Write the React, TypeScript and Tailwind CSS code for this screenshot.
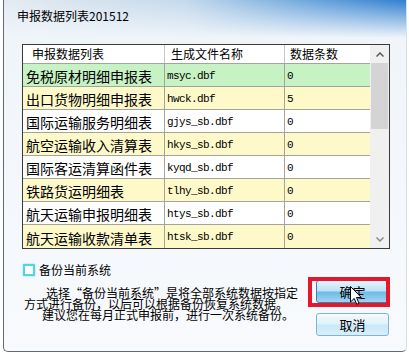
import React from "react";

const rows = [
  { name: "免税原材明细申报表", file: "msyc.dbf", n: "0", bg: "bg-[#c6f2c4]" },
  { name: "出口货物明细申报表", file: "hwck.dbf", n: "5", bg: "bg-[#fdf9c9]" },
  { name: "国际运输服务明细表", file: "gjys_sb.dbf", n: "0", bg: "bg-white" },
  { name: "航空运输收入清算表", file: "hkys_sb.dbf", n: "0", bg: "bg-[#fdf9c9]" },
  { name: "国际客运清算函件表", file: "kyqd_sb.dbf", n: "0", bg: "bg-white" },
  { name: "铁路货运明细表", file: "tlhy_sb.dbf", n: "0", bg: "bg-[#fdf9c9]" },
  { name: "航天运输申报明细表", file: "htys_sb.dbf", n: "0", bg: "bg-white" },
  { name: "航天运输收款清单表", file: "htsk_sb.dbf", n: "0", bg: "bg-[#fdf9c9]" },
];

export default function App() {
  return (
    <div className="relative w-[409px] h-[354px] overflow-hidden bg-white font-['Noto_Sans_CJK_SC',sans-serif] text-black">
      <div className="ml-[3px] w-[404px] h-[352px] flex flex-col border-l border-b border-r border-l-[#5f6a76] border-b-[#5f6a76] border-r-[#d5dfe9] rounded-b-[5px] bg-[linear-gradient(to_bottom,rgba(240,245,250,0)_0px,#f0f5fa_38px,#f8fafd_100%),linear-gradient(to_right,#e4eaf1_0%,#c4d9ec_45%,#6fa8dd_75%,#2f80cf_100%)]">
        {/* title */}
        <div className="h-[32px] pl-[13px] flex items-center text-[12px] leading-none">
          申报数据列表201512
        </div>

        {/* table */}
        <div className="ml-[18px] mt-[12px] w-[368px] h-[205px] border border-[#3a3a3a] flex bg-white">
          <div className="w-[347px] flex flex-col">
            <div className="h-[19px] flex border-b border-[#a4a49c] bg-white text-[12px] leading-none">
              <div className="w-[142px] border-r border-[#c8c8c8] pl-[9px] flex items-center">申报数据列表</div>
              <div className="w-[120px] border-r border-[#c8c8c8] pl-[6px] flex items-center">生成文件名称</div>
              <div className="flex-1 pl-[5px] flex items-center">数据条数</div>
            </div>
            {rows.map((r, i) => (
              <div
                key={i}
                className={`h-[23px] flex ${r.bg} ${i < rows.length - 1 ? "border-b border-[#a4a49c]" : ""}`}
              >
                <div className="w-[142px] border-r border-[#a4a49c] pl-[3px] pt-[2px] flex items-center text-[14px] leading-none whitespace-nowrap overflow-hidden">
                  {r.name}
                </div>
                <div className="w-[120px] border-r border-[#a4a49c] pl-[2px] pt-[2px] flex items-center font-['Liberation_Mono',monospace] text-[11px] tracking-[-0.6px] leading-none">
                  {r.file}
                </div>
                <div className="flex-1 pl-[2px] pt-[2px] flex items-center font-['Liberation_Mono',monospace] text-[11px] leading-none">
                  {r.n}
                </div>
              </div>
            ))}
          </div>
          {/* scrollbar */}
          <div className="w-[19px] flex flex-col bg-[#f0f0f0]">
            <div className="h-[18px] flex items-center justify-center">
              <svg width="8" height="5" viewBox="0 0 8 5">
                <path d="M0.5 4.5 L4 1 L7.5 4.5" fill="none" stroke="#5a5a5a" strokeWidth="1.5" />
              </svg>
            </div>
            <div className="h-[66px] mx-[1px] bg-[#d4d4d4]" />
            <div className="flex-1" />
            <div className="h-[18px] flex items-center justify-center">
              <svg width="8" height="5" viewBox="0 0 8 5">
                <path d="M0.5 0.5 L4 4 L7.5 0.5" fill="none" stroke="#8a8a8a" strokeWidth="1.5" />
              </svg>
            </div>
          </div>
        </div>

        {/* bottom */}
        <div className="flex-1 flex">
          <div className="flex-1 flex flex-col pl-[19px]">
            <div className="mt-[14px] h-[13px] flex items-center gap-[4px]">
              <div className="w-[12px] h-[12px] border-2 border-[#52d4e4] bg-white shadow-[0_0_2px_#7fe6f0]" />
              <span className="text-[12px] leading-none">备份当前系统</span>
            </div>
            <div className="mt-[11px] flex flex-col text-[12px] whitespace-nowrap">
              <div className="ml-[23px] h-[11px] leading-[11px]">选择“备份当前系统”是将全部系统数据按指定</div>
              <div className="ml-[1px] h-[11px] leading-[11px]">方式进行备份，以后可以根据备份恢复系统数据。</div>
              <div className="ml-[19px] h-[11px] leading-[11px]">建议您在每月正式申报前，进行一次系统备份。</div>
            </div>
          </div>
          <div className="w-[73px] mr-[17px] flex flex-col">
            <button className="mt-[31px] h-[23px] w-[73px] rounded-[3px] border border-[#3c7fb1] bg-[linear-gradient(to_bottom,#e6f4fc_0%,#bfe3f6_45%,#6dbbe8_55%,#a2d5f2_100%)] text-[13px] leading-none flex items-center justify-center">
              确定
            </button>
            <button className="mt-[10px] h-[23px] w-[73px] rounded-[3px] border border-[#7fb2dc] bg-[linear-gradient(to_bottom,#f4fafe_0%,#e2f2fb_45%,#c9e8f8_55%,#d8effb_100%)] text-[13px] leading-none flex items-center justify-center">
              取消
            </button>
          </div>
        </div>
      </div>

      {/* red annotation box */}
      <div className="absolute left-[308px] top-[277px] w-[82px] h-[30px] border-4 border-[#e3192b]" />

      {/* mouse cursor */}
      <svg className="absolute left-[350px] top-[286px]" width="12" height="19" viewBox="0 0 12 19">
        <path d="M0.5 0.5 L0.5 16 L4.2 12.4 L6.8 18.3 L9 17.3 L6.5 11.5 L11.3 11.5 Z" fill="#ffffff" stroke="#000000" strokeWidth="1" strokeLinejoin="miter" />
      </svg>
    </div>
  );
}
